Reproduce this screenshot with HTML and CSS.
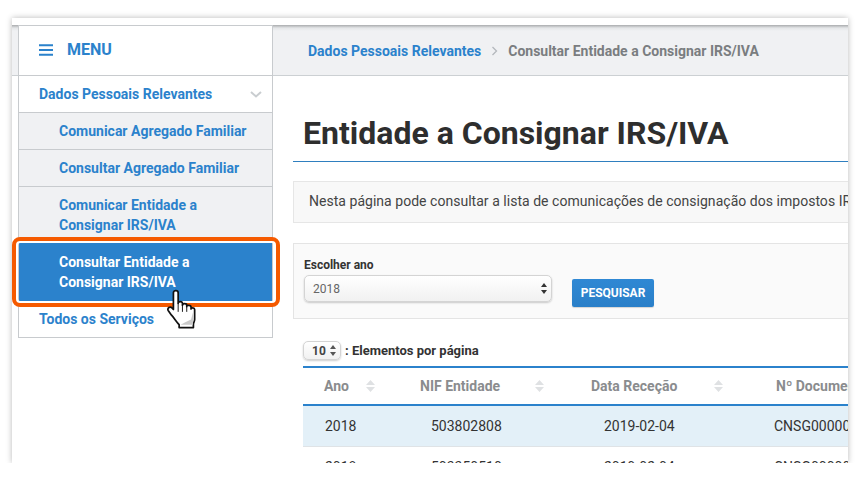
FILE: index.html
```html
<!DOCTYPE html>
<html lang="pt">
<head>
  <meta charset="UTF-8">
  <title>Consultar Entidade a Consignar IRS/IVA</title>
  <link rel="stylesheet" href="styles.css">
</head>
<body>
  <div class="frame">
    <div class="shell">
      <div class="topbar"></div>
      <div class="breadcrumb">
        <a class="crumb-link">Dados Pessoais Relevantes</a>
        <svg class="crumb-sep" width="7" height="10" viewBox="0 0 7 10"><path d="M1.500 1l4 4-4 4" fill="none" stroke="#b4b8bc" stroke-width="1.3"/></svg>
        <span>Consultar Entidade a Consignar IRS/IVA</span>
      </div>

      <nav class="sidebar">
        <div class="menu-head">
          <svg width="14" height="12" viewBox="0 0 14 12"><path d="M0 1.200h14M0 6h14M0 10.800h14" stroke="#2b82cc" stroke-width="2"/></svg>
          <span>MENU</span>
        </div>
        <div class="menu-group">
          <span>Dados Pessoais Relevantes</span>
          <svg width="12" height="7" viewBox="0 0 12 7"><path d="M1 1l5 4.500L11 1" fill="none" stroke="#c9cdd0" stroke-width="2"/></svg>
        </div>
        <a class="menu-sub">Comunicar Agregado Familiar</a>
        <a class="menu-sub">Consultar Agregado Familiar</a>
        <a class="menu-sub double">Comunicar Entidade a<br>Consignar IRS/IVA</a>
        <a class="menu-sub active">
          Consultar Entidade a<br>Consignar IRS/IVA
          <span class="highlight"></span>
          <svg class="hand" width="29" height="40" viewBox="0 0 30 42">
            <path d="M6.500 4C6.500 .8 11.500 .8 11.500 4V15C11.500 12.600 16 12.600 16 15V17C16 14.800 20.500 14.800 20.500 17V18.500C20.500 16.600 25 16.600 25 19V21C25 19.400 28.800 19.400 28.800 21.500V32C28.800 34 27.500 35.500 27.500 37V40.500H12.500V37.500C10 35 7 30 4.500 27.500L1 22.500C-.2 20 3 17.800 5 19.800L6.500 21.500Z" fill="#fff" stroke="#111" stroke-width="1.800" stroke-linejoin="round"/>
            <path d="M11.500 15V24M16 17V24M20.500 18.500V24" stroke="#111" stroke-width="1"/>
            <path d="M14 37.500H27V33C27.500 30 27.600 26 27.500 23L25 32 19 35Z" fill="#c9c9c9"/>
          </svg>
        </a>
        <div class="menu-group last">Todos os Serviços</div>
      </nav>

      <main class="content">
        <h1 class="title">Entidade a Consignar IRS/IVA</h1>
        <p class="info">Nesta página pode consultar a lista de comunicações de consignação dos impostos IRS/IVA.</p>

        <form class="search">
          <div class="field">
            <label class="field-label">Escolher ano</label>
            <div class="select year">
              <span>2018</span>
              <svg width="6" height="11" viewBox="0 0 6 11"><path d="M3 0l3 4H0zM3 11L0 7h6z" fill="#333"/></svg>
            </div>
          </div>
          <button type="button" class="btn">PESQUISAR</button>
        </form>

        <div class="page-size">
          <div class="select small">
            <span>10</span>
            <svg width="6" height="11" viewBox="0 0 6 11"><path d="M3 0l3 4H0zM3 11L0 7h6z" fill="#555"/></svg>
          </div>
          <span>: Elementos por página</span>
        </div>

        <table class="results">
          <colgroup>
            <col class="c1"><col class="c2"><col class="c3"><col class="c4">
          </colgroup>
          <thead>
            <tr>
              <th><div class="th-in">Ano <svg width="9" height="12" viewBox="0 0 9 12"><path d="M4.500 0l4.500 5H0zM4.500 12L0 7h9z" fill="#dfe1e3"/></svg></div></th>
              <th><div class="th-in">NIF Entidade <svg width="9" height="12" viewBox="0 0 9 12"><path d="M4.500 0l4.500 5H0zM4.500 12L0 7h9z" fill="#dfe1e3"/></svg></div></th>
              <th><div class="th-in">Data Receção <svg width="9" height="12" viewBox="0 0 9 12"><path d="M4.500 0l4.500 5H0zM4.500 12L0 7h9z" fill="#dfe1e3"/></svg></div></th>
              <th><div class="th-in">Nº Documento</div></th>
            </tr>
          </thead>
          <tbody>
            <tr class="odd"><td>2018</td><td>503802808</td><td>2019-02-04</td><td>CNSG00000001</td></tr>
            <tr><td>2018</td><td>503350510</td><td>2019-02-04</td><td>CNSG00000002</td></tr>
          </tbody>
        </table>
      </main>
    </div>
  </div>
</body>
</html>
```

FILE: styles.css
```css
* {
  box-sizing: border-box;
}

body {
  margin: 0;
  background: #fff;
  font-family: Roboto, "Liberation Sans", sans-serif;
  color: #333;
  overflow: hidden;
}

.frame {
  width: 836px;
  height: 445px;
  margin: 18px 12px 0;
  padding-top: 7px;
  background: #fff;
  box-shadow: 0 0 6px rgba(0, 0, 0, 0.28);
  overflow: hidden;
}

.shell {
  display: grid;
  grid-template-columns: 6px 255px 1fr;
  grid-template-rows: 51px 1fr;
  height: 438px;
}

/* top bar runs behind the sidebar */
.topbar {
  grid-row: 1;
  grid-column: 1 / 4;
  background: linear-gradient(#a9abad, #e4e6e8 3px, #f0f1f3 6px);
  border-bottom: 1px solid #ccd0d3;
}

.breadcrumb {
  grid-row: 1;
  grid-column: 3;
  display: flex;
  align-items: center;
  padding-left: 35px;
  font-size: 14px;
  font-weight: 700;
  color: #7a7d80;
  white-space: nowrap;
}

.crumb-link {
  color: #2b82cc;
}

.crumb-sep {
  margin: 1px 10px 0 10px;
}

.sidebar {
  grid-row: 1 / 3;
  grid-column: 2;
  align-self: start;
  position: relative;
  background: #fff;
  border: 1px solid #c8cbce;
  font-size: 14px;
  font-weight: 700;
  color: #2b82cc;
}

.menu-head {
  display: flex;
  align-items: center;
  height: 50px;
  padding: 0 0 2px 20px;
  border-bottom: 1px solid #c8cbce;
  font-size: 16px;
}

.menu-head span {
  margin-left: 14px;
}

.menu-group {
  display: flex;
  align-items: center;
  justify-content: space-between;
  height: 36px;
  padding: 0 10px 0 20px;
}

.menu-sub {
  display: block;
  position: relative;
  padding: 9px 20px 8px 40px;
  line-height: 19px;
  background: #f0f1f3;
  border-top: 1px solid #c8cbce;
}

.menu-sub.double {
  line-height: 20px;
  padding: 8px 20px;
  padding-left: 40px;
}

.menu-sub.active {
  line-height: 20px;
  height: 58px;
  padding: 9px 20px 0 40px;
  background: #2b82cc;
  border-top: 0;
  color: #fff;
}

.highlight {
  position: absolute;
  left: -7px;
  right: -8px;
  top: -6px;
  bottom: -6px;
  border: 4px solid #f55a00;
  border-radius: 8px;
  box-shadow: inset 0 0 0 2px #fff;
}

.hand {
  position: absolute;
  left: 148px;
  top: 46px;
}

.content {
  grid-row: 1 / 3;
  grid-column: 3;
  padding: 51px 0 0 20px;
  min-width: 0;
}

.title {
  margin: 0;
  padding: 35px 0 0 10px;
  height: 86px;
  border-bottom: 1px solid #2f7fbf;
  font-size: 32px;
  line-height: 44px;
  font-weight: 700;
  color: #2e2e2e;
}

.info {
  margin: 19px 0 0;
  height: 42px;
  padding: 0 15px;
  line-height: 38px;
  font-size: 14px;
  letter-spacing: 0.03px;
  white-space: nowrap;
  overflow: hidden;
  background: #f8f8f8;
  border: 1px solid #e6e6e6;
  border-right: 0;
  color: #444;
}

.search {
  display: flex;
  align-items: flex-start;
  height: 76px;
  margin-top: 20px;
  padding: 14px 0 0 10px;
  background: #fafafa;
  border: 1px solid #e4e4e4;
  border-right: 0;
}

.field-label {
  display: block;
  font-size: 12px;
  line-height: 14px;
  font-weight: 700;
  color: #333;
}

.select {
  display: flex;
  align-items: center;
  justify-content: space-between;
  background: linear-gradient(#fff, #f1f1f1);
  border: 1px solid #d4d4d4;
  border-radius: 5px;
  box-shadow: 0 1px 2px rgba(0, 0, 0, 0.2);
  color: #666;
}

.year {
  width: 248px;
  height: 27px;
  margin-top: 3px;
  padding: 0 4px 0 8px;
  font-size: 12px;
}

.btn {
  width: 82px;
  height: 28px;
  margin: 21px 0 0 20px;
  padding: 0;
  border: 0;
  border-radius: 2px;
  background: linear-gradient(#2f88d4, #2a7fc8);
  box-shadow: 0 1px 1px rgba(0, 0, 0, 0.15);
  color: #fff;
  font-family: inherit;
  font-size: 12px;
  font-weight: 700;
}

.page-size {
  display: flex;
  align-items: center;
  margin: 22px 0 0 10px;
  font-size: 13px;
  font-weight: 700;
  color: #333;
}

.small {
  width: 38px;
  height: 19px;
  padding: 0 4px 0 8px;
  margin-right: 4px;
  font-size: 12px;
  color: #444;
}

.results {
  width: 545px;
  margin: 6px 0 0 10px;
  border-collapse: collapse;
  table-layout: fixed;
  border-top: 2px solid #2b82cc;
  font-size: 14px;
}

.c1 {
  width: 77px;
}

.c2 {
  width: 170px;
}

.c3 {
  width: 180px;
}

.c4 {
  width: 118px;
}

.results th {
  height: 38px;
  padding: 0;
  border-bottom: 2px solid #2b82cc;
  font-weight: 700;
  text-align: left;
  color: #8a8c8e;
  white-space: nowrap;
}

.th-in {
  display: flex;
  align-items: center;
  justify-content: space-between;
  padding-right: 5px;
  overflow: hidden;
}

th:nth-child(1) .th-in {
  padding-left: 21px;
}

th:nth-child(2) .th-in {
  padding-left: 40px;
  padding-right: 6px;
}

th:nth-child(3) .th-in {
  padding-left: 41px;
  padding-right: 7px;
}

th:nth-child(4) .th-in {
  padding-left: 46px;
}

.results td {
  height: 41px;
  padding: 0;
  border-bottom: 1px solid #dfe3e6;
  white-space: nowrap;
  overflow: hidden;
}

td:nth-child(1) {
  padding-left: 22px;
}

td:nth-child(2) {
  padding-left: 51px;
}

td:nth-child(3) {
  padding-left: 54px;
}

td:nth-child(4) {
  padding-left: 44px;
}

.odd td {
  background: #e3f0f8;
}
```
